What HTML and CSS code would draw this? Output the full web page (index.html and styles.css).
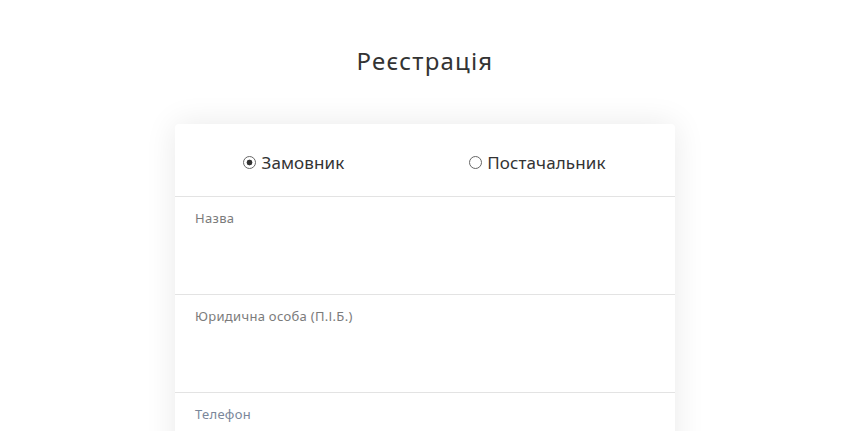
FILE: index.html
```html
<!DOCTYPE html>
<html>
<head>
<meta name="viewport" content="width=device-width, initial-scale=1">
<link rel="stylesheet" href="styles.css">
</head>
<body>

<div class="page">
  <h1 class="title">Реєстрація</h1>

  <form class="card">
    <div class="roles">
      <label class="role"><input type="radio" name="role" checked> Замовник</label>
      <label class="role"><input type="radio" name="role"> Постачальник</label>
    </div>
    <div class="field">
      <label class="field-label">Назва</label>
      <input class="field-input" type="text">
    </div>
    <div class="field">
      <label class="field-label">Юридична особа (П.І.Б.)</label>
      <input class="field-input" type="text">
    </div>
    <div class="field">
      <label class="field-label phone">Телефон</label>
      <input class="field-input" type="tel">
    </div>
  </form>
</div>

</body>
</html>
```

FILE: styles.css
```css
* {
  box-sizing: border-box;
}

body {
  margin: 0;
  background: #fff;
  font-family: "Noto Sans", "Open Sans", sans-serif;
  color: #333;
}

.page {
  width: 850px;
  height: 431px;
  overflow: hidden;
}

/* Page title */
.title {
  margin: 0;
  padding-top: 44px;
  text-align: center;
  font-size: 24px;
  font-weight: 400;
  line-height: 34px;
  letter-spacing: 1.2px;
  color: #333;
}

/* Form card */
.card {
  width: 500px;
  margin: 46px auto 0;
  background: #fff;
  border-radius: 4px;
  box-shadow: 0 0 32px rgba(0, 0, 0, 0.09);
}

.roles {
  display: flex;
  justify-content: space-around;
  align-items: center;
  height: 73px;
  padding: 4px 7px 0 6px;
  border-bottom: 1px solid #e3e3e3;
}

.role {
  display: flex;
  align-items: center;
  font-size: 17px;
  letter-spacing: 0.1px;
  color: #333;
  cursor: pointer;
}

/* Ring-style radio */
.role input {
  appearance: none;
  width: 13px;
  height: 13px;
  margin: 0 5px 0 0;
  border: 1.5px solid #666;
  border-radius: 50%;
  background: #fff;
}

.role input:checked {
  background: radial-gradient(circle, #333 0, #333 2.6px, #fff 3.2px);
}

.field {
  height: 98px;
  padding: 12px 20px;
  border-bottom: 1px solid #e3e3e3;
}

.field-label {
  display: block;
  font-size: 13px;
  letter-spacing: 0.3px;
  color: #7b7b7b;
}

.phone {
  color: #7a879a;
}

.field-input {
  display: block;
  width: 100%;
  margin-top: 10px;
  border: none;
  outline: none;
  font-family: inherit;
  font-size: 15px;
  padding: 6px 0;
}
```
